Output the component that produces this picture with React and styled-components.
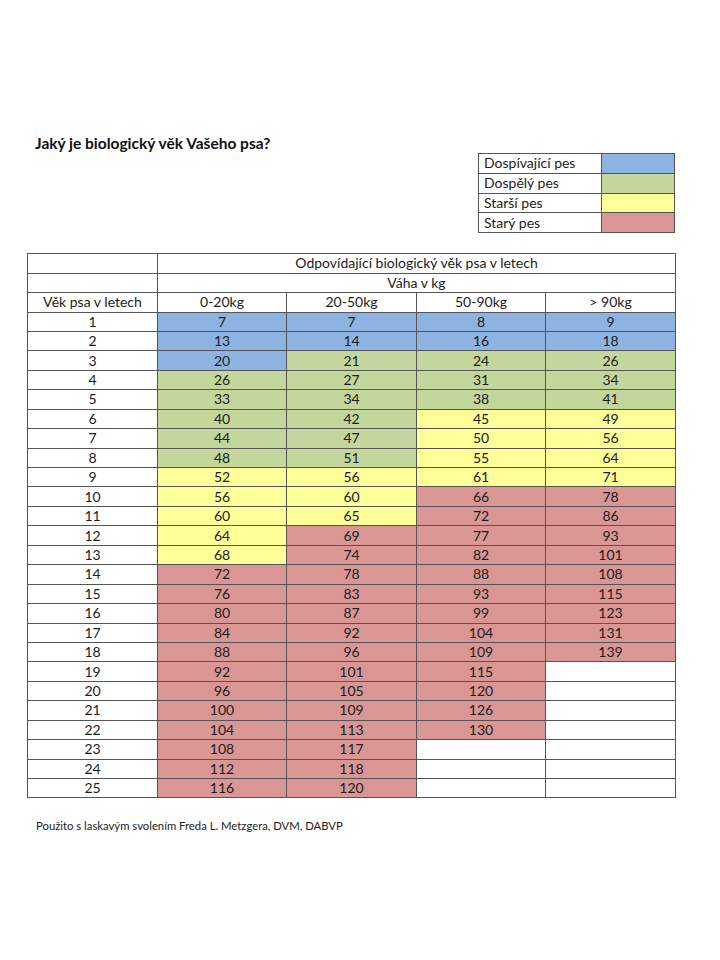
import React from "react";
import styled, { createGlobalStyle } from "styled-components";

const Global = createGlobalStyle`
  html, body { margin: 0; padding: 0; background: #fff; }
  body { font-family: Lato, "Noto Sans", "Liberation Sans", sans-serif; color: #1c1c1c; }
`;

const COLORS = {
  B: "#8db3e2",
  G: "#c3d69b",
  Y: "#ffff99",
  R: "#d99694",
  W: "#ffffff",
};

const Page = styled.div`
  width: 720px;
  height: 960px;
  box-sizing: border-box;
  padding: 133px 45px 0 27px;
  display: flex;
  flex-direction: column;
`;

const Header = styled.div`
  display: flex;
  justify-content: space-between;
  align-items: flex-start;
`;

const Title = styled.h1`
  margin: 0 0 0 8px;
  font-size: 15.5px;
  line-height: 20px;
  font-weight: 700;
  color: #111;
`;

const Legend = styled.table`
  margin-top: 20px;
  border-collapse: collapse;
  width: 197px;
  font-size: 14px;
`;

const LegendLabel = styled.td`
  border: 1px solid #555;
  width: 117px;
  height: 18.8px;
  padding: 0 0 0 5px;
  line-height: 18px;
  color: #1c1c1c;
  white-space: nowrap;
`;

const LegendSwatch = styled.td`
  border: 1px solid #555;
  padding: 0;
  background: ${(p) => COLORS[p.$c]};
`;

const Grid = styled.table`
  margin-top: 20px;
  border-collapse: collapse;
  width: 649px;
  table-layout: fixed;
  font-size: 14px;
`;

const Cell = styled.td`
  border: 1px solid #555;
  height: 18.45px;
  padding: 0;
  text-align: center;
  line-height: 18px;
  background: ${(p) => COLORS[p.$c] || "#fff"};
  color: #1c1c1c;
  white-space: nowrap;
`;

const Col = styled.col`
  width: ${(p) => p.$w}px;
`;

const Footer = styled.p`
  margin: 21px 0 0 9px;
  font-size: 11.3px;
  line-height: 14px;
  color: #1c1c1c;
`;

const legend = [
  ["Dospívající pes", "B"],
  ["Dospělý pes", "G"],
  ["Starší pes", "Y"],
  ["Starý pes", "R"],
];

const rows = [
  [[7, "B"], [7, "B"], [8, "B"], [9, "B"]],
  [[13, "B"], [14, "B"], [16, "B"], [18, "B"]],
  [[20, "B"], [21, "G"], [24, "G"], [26, "G"]],
  [[26, "G"], [27, "G"], [31, "G"], [34, "G"]],
  [[33, "G"], [34, "G"], [38, "G"], [41, "G"]],
  [[40, "G"], [42, "G"], [45, "Y"], [49, "Y"]],
  [[44, "G"], [47, "G"], [50, "Y"], [56, "Y"]],
  [[48, "G"], [51, "G"], [55, "Y"], [64, "Y"]],
  [[52, "Y"], [56, "Y"], [61, "Y"], [71, "Y"]],
  [[56, "Y"], [60, "Y"], [66, "R"], [78, "R"]],
  [[60, "Y"], [65, "Y"], [72, "R"], [86, "R"]],
  [[64, "Y"], [69, "R"], [77, "R"], [93, "R"]],
  [[68, "Y"], [74, "R"], [82, "R"], [101, "R"]],
  [[72, "R"], [78, "R"], [88, "R"], [108, "R"]],
  [[76, "R"], [83, "R"], [93, "R"], [115, "R"]],
  [[80, "R"], [87, "R"], [99, "R"], [123, "R"]],
  [[84, "R"], [92, "R"], [104, "R"], [131, "R"]],
  [[88, "R"], [96, "R"], [109, "R"], [139, "R"]],
  [[92, "R"], [101, "R"], [115, "R"], ["", "W"]],
  [[96, "R"], [105, "R"], [120, "R"], ["", "W"]],
  [[100, "R"], [109, "R"], [126, "R"], ["", "W"]],
  [[104, "R"], [113, "R"], [130, "R"], ["", "W"]],
  [[108, "R"], [117, "R"], ["", "W"], ["", "W"]],
  [[112, "R"], [118, "R"], ["", "W"], ["", "W"]],
  [[116, "R"], [120, "R"], ["", "W"], ["", "W"]],
];

export default function App() {
  return (
    <>
      <Global />
      <Page>
        <Header>
          <Title>Jaký je biologický věk Vašeho psa?</Title>
          <Legend>
            <tbody>
              {legend.map(([label, c]) => (
                <tr key={label}>
                  <LegendLabel>{label}</LegendLabel>
                  <LegendSwatch $c={c} />
                </tr>
              ))}
            </tbody>
          </Legend>
        </Header>
        <Grid>
          <colgroup>
            <Col $w={130} />
            <Col $w={129} />
            <Col $w={130} />
            <Col $w={129} />
            <Col $w={130} />
          </colgroup>
          <tbody>
            <tr>
              <Cell />
              <Cell colSpan={4}>Odpovídající biologický věk psa v letech</Cell>
            </tr>
            <tr>
              <Cell />
              <Cell colSpan={4}>Váha v kg</Cell>
            </tr>
            <tr>
              <Cell>Věk psa v letech</Cell>
              <Cell>0-20kg</Cell>
              <Cell>20-50kg</Cell>
              <Cell>50-90kg</Cell>
              <Cell>&gt; 90kg</Cell>
            </tr>
            {rows.map((r, i) => (
              <tr key={i}>
                <Cell>{i + 1}</Cell>
                {r.map(([v, c], j) => (
                  <Cell key={j} $c={c}>
                    {v}
                  </Cell>
                ))}
              </tr>
            ))}
          </tbody>
        </Grid>
        <Footer>Použito s laskavým svolením Freda L. Metzgera, DVM, DABVP</Footer>
      </Page>
    </>
  );
}
